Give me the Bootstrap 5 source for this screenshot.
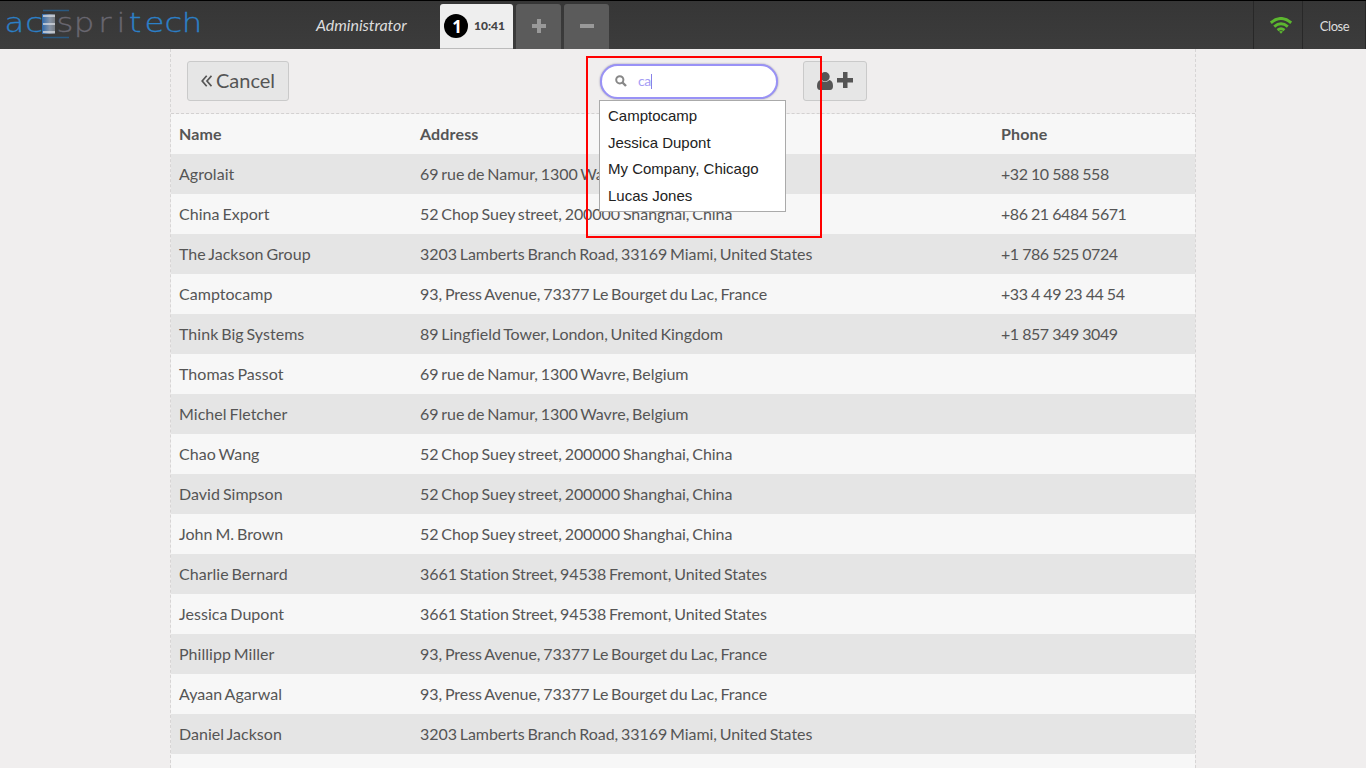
<!DOCTYPE html>
<html lang="en">
<head>
<meta charset="utf-8">
<title>Point of Sale - Customers</title>
<link href="https://cdn.jsdelivr.net/npm/bootstrap@5.3.0/dist/css/bootstrap.min.css" rel="stylesheet">
<style>
html,body{height:100%;overflow:hidden}
body{font-family:Lato,sans-serif;font-size:16px;line-height:20px;color:#555;background:#f0eeee}
.topbar{height:49px;background:linear-gradient(#363636,#3c3c3c);border-top:1px solid #000;color:#ddd}
.logo-box{width:316px}
.user-name{width:124px;font-style:italic;letter-spacing:-.05px}
.tab{height:45px;margin-right:3px;border-radius:3px 3px 0 0}
.tab-order{width:73px;background:#eee;border-bottom:1px solid #bbb;color:#444;font-size:12px;font-weight:900;padding-left:4px}
.tab-order .num{width:24px;height:24px;background:#000;color:#fff;font:bold 17px/25px "Noto Sans",sans-serif;padding-left:2px;margin-right:6px}
.tab-btn{width:45px;background:#5b5b5b;padding-bottom:2px}
.status{border-left:1px solid #282828;height:48px}
.wifi{width:49px;padding-left:5px}
.close-btn{width:64px;font-size:13px;border-right:1px solid #282828;padding:2px 0 0 1px;letter-spacing:-.4px}
.screen{width:1026px;margin-left:170px;height:719px;border:dashed #d7d5d5;border-width:0 1px}
.toolbar{height:65px;border-bottom:1px dashed #d3d1d1}
.pos-btn{height:40px;background:#e6e6e6;border:1px solid #cacaca;border-radius:3px;color:#555;font-size:20px}
.cancel{left:16px;top:12px;width:102px}
.cancel span{position:relative;top:-1px}
.adduser{left:632px;top:12px;width:64px}
.searchbox{left:429px;top:15px;width:178px;height:35px;background:#fff;border:2px solid #9992f6;border-radius:18px;box-shadow:0 0 2px #8d88aa;color:#a49df5;font-size:14px;padding:0 0 1px 13px}
.caret{width:1px;height:15px;background:#8881e8}
.suggest{left:428px;top:51px;width:187px;height:112px;background:#fff;border:1px solid #aaa;color:#222;font:15px/26.6px "Liberation Sans",sans-serif;z-index:3;padding:2px 8px}
.highlight-box{left:415px;top:7px;width:236px;height:182px;border:2px solid #f00;z-index:4}
.clients{table-layout:fixed;border-collapse:collapse;width:1024px}
.clients tr{height:40px;background:#f7f7f7}
.clients tbody tr:nth-child(odd){background:#e5e5e5}
.clients th,.clients td{padding:0 8px;white-space:nowrap}
.clients th{letter-spacing:.15px}
.clients td{word-spacing:-1.2px;letter-spacing:-.05px}
.clients td:first-child{word-spacing:-1.2px;letter-spacing:.03px}
.clients td:last-child{word-spacing:-.2px;letter-spacing:-.43px}
</style>
</head>
<body>
<header class="topbar d-flex">
  <div class="logo-box">
    <svg class="d-block" width="210" height="48" viewBox="0 1 210 48">
      <defs><linearGradient id="bar" x1="0" x2="1"><stop offset="0" stop-color="#2d69ac"/><stop offset=".6" stop-color="#8794a6"/><stop offset="1" stop-color="#777c83"/></linearGradient></defs>
      <path d="M43 10.500h26M43 37.500h26" stroke="#285982" stroke-width="1.300"/>
      <path fill="url(#bar)" d="M42 14h13v20H42z"/>
      <path d="M43 16h12M43 24h12M43 32h12" stroke="#d5d9df" stroke-width="1.500"/>
      <g transform="scale(1.2 1)" font-family="DejaVu Sans" font-weight="200" font-size="27" text-anchor="middle" stroke-width=".3">
        <text fill="#2c80c8" stroke="#2c80c8" y="32" x="12.100 28.500">ac</text>
        <text fill="#696770" stroke="#696770" y="32" x="54.200 70 87.500 100.800">spri</text>
        <text fill="#2c80c8" stroke="#2c80c8" y="32" x="112.500 128.700 144.600 160">tech</text>
      </g>
    </svg>
  </div>
  <div class="user-name d-flex align-items-center">Administrator</div>
  <div class="d-flex align-items-end flex-grow-1">
    <div class="tab tab-order d-flex align-items-center"><span class="num rounded-circle text-center">1</span>10:41</div>
    <div class="tab tab-btn d-flex align-items-center justify-content-center"><svg width="14" height="14"><path d="M7 0v14M0 7h14" stroke="#999" stroke-width="4"/></svg></div>
    <div class="tab tab-btn d-flex align-items-center justify-content-center"><svg width="14" height="14"><path d="M0 7h14" stroke="#999" stroke-width="4"/></svg></div>
  </div>
  <div class="status wifi d-flex align-items-center justify-content-center"><svg width="22" height="17" viewBox="0 0 22 17" fill="none" stroke="#5cb72f" stroke-width="2.900"><path d="M.8 5.800q10.200-8.700 20.400 0M4.200 9.600q6.800-5.600 13.600 0M7.500 13.100q3.500-2.700 7 0"/><path d="M9 14.600q2-1.400 4 0l-2 2.200z" fill="#5cb72f" stroke="none"/></svg></div>
  <div class="status close-btn d-flex align-items-center justify-content-center">Close</div>
</header>
<main class="screen position-relative">
  <div class="toolbar">
    <div class="pos-btn cancel position-absolute d-flex align-items-center justify-content-center"><svg class="me-1" width="11" height="12" fill="none" stroke="#555" stroke-width="1.700"><path d="M5.700.8L1.200 6l4.500 5.200M10.500.8L6 6l4.500 5.200"/></svg><span>Cancel</span></div>
    <div class="searchbox position-absolute d-flex align-items-center"><svg width="12" height="12" fill="none" stroke="#888"><circle cx="4.800" cy="4.800" r="3.600" stroke-width="2"/><path d="M7.500 7.500l3.500 3.500" stroke-width="2.400"/></svg><span style="margin-left:11px;letter-spacing:-.4px">ca</span><span class="caret"></span></div>
    <div class="pos-btn adduser position-absolute d-flex align-items-center justify-content-center"><svg width="37" height="18" fill="#555"><circle cx="8" cy="4.700" r="4.700"/><path d="M3.500 8Q8 12 12.500 8 16 9 16 14q0 4-3 4H3q-3 0-3-4 0-5 3.500-6z"/><path d="M26 0h4.500v6H36v4.500h-5.500V16H26v-5.500h-6V6h6z"/></svg></div>
  </div>
  <table class="clients">
    <colgroup><col style="width:241px"><col style="width:581px"><col style="width:202px"></colgroup>
    <thead><tr><th>Name</th><th>Address</th><th>Phone</th></tr></thead>
    <tbody>
      <tr><td>Agrolait</td><td>69 rue de Namur, 1300 Wavre, Belgium</td><td>+32 10 588 558</td></tr>
      <tr><td>China Export</td><td>52 Chop Suey street, 200000 Shanghai, China</td><td>+86 21 6484 5671</td></tr>
      <tr><td>The Jackson Group</td><td>3203 Lamberts Branch Road, 33169 Miami, United States</td><td>+1 786 525 0724</td></tr>
      <tr><td>Camptocamp</td><td>93, Press Avenue, 73377 Le Bourget du Lac, France</td><td>+33 4 49 23 44 54</td></tr>
      <tr><td>Think Big Systems</td><td>89 Lingfield Tower, London, United Kingdom</td><td>+1 857 349 3049</td></tr>
      <tr><td>Thomas Passot</td><td>69 rue de Namur, 1300 Wavre, Belgium</td><td></td></tr>
      <tr><td>Michel Fletcher</td><td>69 rue de Namur, 1300 Wavre, Belgium</td><td></td></tr>
      <tr><td>Chao Wang</td><td>52 Chop Suey street, 200000 Shanghai, China</td><td></td></tr>
      <tr><td>David Simpson</td><td>52 Chop Suey street, 200000 Shanghai, China</td><td></td></tr>
      <tr><td>John M. Brown</td><td>52 Chop Suey street, 200000 Shanghai, China</td><td></td></tr>
      <tr><td>Charlie Bernard</td><td>3661 Station Street, 94538 Fremont, United States</td><td></td></tr>
      <tr><td>Jessica Dupont</td><td>3661 Station Street, 94538 Fremont, United States</td><td></td></tr>
      <tr><td>Phillipp Miller</td><td>93, Press Avenue, 73377 Le Bourget du Lac, France</td><td></td></tr>
      <tr><td>Ayaan Agarwal</td><td>93, Press Avenue, 73377 Le Bourget du Lac, France</td><td></td></tr>
      <tr><td>Daniel Jackson</td><td>3203 Lamberts Branch Road, 33169 Miami, United States</td><td></td></tr>
    </tbody>
    <tfoot><tr><td colspan="3"></td></tr></tfoot>
  </table>
  <div class="suggest position-absolute"><div>Camptocamp</div><div>Jessica Dupont</div><div>My Company, Chicago</div><div>Lucas Jones</div></div>
  <div class="highlight-box position-absolute"></div>
</main>
<script src="https://cdn.jsdelivr.net/npm/bootstrap@5.3.0/dist/js/bootstrap.bundle.min.js"></script>
</body>
</html>
